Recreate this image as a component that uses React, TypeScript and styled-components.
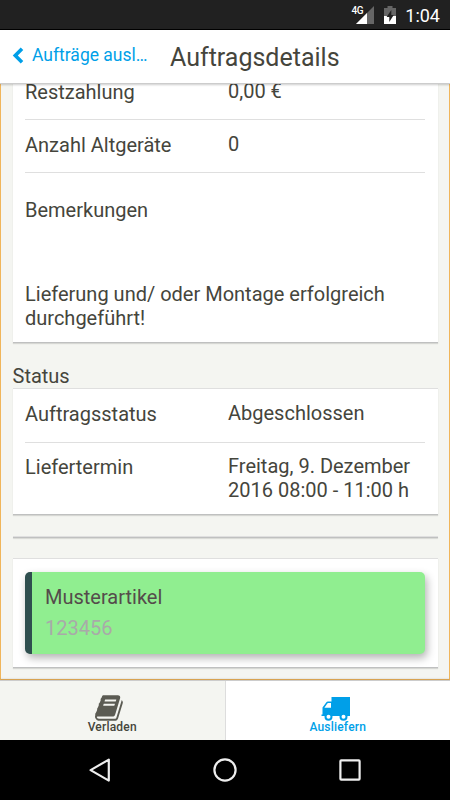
import React from "react";
import styled, { createGlobalStyle } from "styled-components";

const colors = {
  text: "#45453c",
  blue: "#009fe8",
  page: "#f4f5f1",
  line: "#dfdfdf",
  orange: "#f0b55a",
};

const App = () => {
  const orderRows = [
    { label: "Restzahlung", value: "0,00 €" },
    { label: "Anzahl Altgeräte", value: "0" },
  ];

  const statusRows = [
    { label: "Auftragsstatus", value: "Abgeschlossen" },
    { label: "Liefertermin", value: "Freitag, 9. Dezember 2016 08:00 - 11:00 h" },
  ];

  return (
    <>
      <GlobalStyle />
      <Screen>
        <StatusBar>
          <Network>4G</Network>
          <SignalIcon />
          <BatteryIcon />
          <Clock>1:04</Clock>
        </StatusBar>
        <Header>
          <BackButton>
            <svg width="12" height="17" viewBox="0 0 12 17">
              <path d="M10 1.8 3.3 8.5 10 15.2" fill="none" stroke="currentColor" strokeWidth="3.6" />
            </svg>
            <BackText>Aufträge ausl…</BackText>
          </BackButton>
          <Title>Auftragsdetails</Title>
        </Header>
        <Content>
          <OrderCard>
            {orderRows.map((row) => (
              <Row key={row.label}>
                <Label>{row.label}</Label>
                <Value>{row.value}</Value>
              </Row>
            ))}
            <Remarks>
              <Label>Bemerkungen</Label>
              <RemarkText>Lieferung und/ oder Montage erfolgreich durchgeführt!</RemarkText>
            </Remarks>
          </OrderCard>
          <SectionTitle>Status</SectionTitle>
          <StatusCard>
            {statusRows.map((row) => (
              <Row key={row.label}>
                <Label>{row.label}</Label>
                <Value>{row.value}</Value>
              </Row>
            ))}
          </StatusCard>
          <EmptyCard />
          <ArticleCard>
            <Article>
              <ArticleName>Musterartikel</ArticleName>
              <ArticleNumber>123456</ArticleNumber>
            </Article>
          </ArticleCard>
        </Content>
        <Tabs>
          <Tab>
            <BookIcon />
            <TabText>Verladen</TabText>
          </Tab>
          <Tab $active>
            <TruckIcon />
            <TabText>Ausliefern</TabText>
          </Tab>
        </Tabs>
        <SystemNav>
          <svg width="26" height="26" viewBox="0 0 26 26">
            <path d="M21.8 2.6v21L3.6 13.1Z" />
          </svg>
          <svg width="26" height="26" viewBox="0 0 26 26">
            <circle cx="13" cy="13" r="10.6" />
          </svg>
          <svg width="26" height="26" viewBox="0 0 26 26">
            <rect x="3.4" y="3.4" width="19.2" height="19.2" rx="0.8" />
          </svg>
        </SystemNav>
      </Screen>
    </>
  );
};

export default App;

const SignalIcon = () => (
  <svg width="18" height="18" viewBox="0 0 18 18">
    <path d="M18 0v18H0Z" fill="#666" />
    <path d="M11 7V18H0Z" fill="#fff" />
  </svg>
);

const BatteryIcon = () => (
  <svg width="12" height="18" viewBox="0 0 12 18">
    <path d="M3.5 0h5v2H12v8H0V2h3.5Z" fill="#666" />
    <path d="M0 10h12v8H0Z" fill="#fff" />
    <path d="M7.3 4 2.6 11h2.7v5l4.4-7H7.3Z" fill="#212121" />
  </svg>
);

const BookIcon = () => (
  <svg width="30" height="30" viewBox="0 0 1792 1792" fill="#5b5b53">
    <path d="M1639 478q40 57 18 129l-275 906q-19 64-76.500 107.500t-122.500 43.500h-923q-77 0-148.500-53.500t-99.500-131.500q-24-67-2-127 0-4 3-27t4-37q1-8-3-21.500t-3-19.500q2-11 8-21t16.500-23.500 16.500-23.500q23-38 45-91.500t30-91.500q3-10 .5-30t-.5-28q3-11 17-28t17-23q21-36 42-92t25-90q1-9-2.500-32t.5-28q4-13 22-30.500t22-22.500q19-26 42.500-84.500t27.500-96.500q1-8-3-25.500t-2-26.500q2-8 9-18t18-23 17-21q8-12 16.500-30.500t15-35 16-36 19.500-32 26.500-23.500 36-11.500 47.500 5.500l-1 3q38-9 51-9h761q74 0 114 56t18 130l-274 906q-36 119-71.500 153.500t-128.500 34.500h-869q-27 0-38 15-11 16-1 43 24 70 144 70h923q29 0 56-15.500t35-41.500l300-987q7-22 5-57 38 15 59 43zm-1064 2q-4 13 2 22.500t20 9.500h608q13 0 25.500-9.500t16.500-22.500l21-64q4-13-2-22.500t-20-9.500h-608q-13 0-25.500 9.500t-16.500 22.500zm-83 256q-4 13 2 22.500t20 9.500h608q13 0 25.500-9.500t16.500-22.500l21-64q4-13-2-22.500t-20-9.500h-608q-13 0-25.500 9.500t-16.500 22.500z" />
  </svg>
);

const TruckIcon = () => (
  <svg width="30" height="30" viewBox="0 0 30 30">
    <path
      d="M10.5 4h18.5v19H0.5v-1.5H1.5V14.5L5.2 9.5Q5.8 8.5 7 8.5h3.5Z M3.4 14.8H10V10H7.2Q6.6 10 6.3 10.500Z"
      fill="currentColor"
      fillRule="evenodd"
    />
    <circle cx="7.5" cy="23.7" r="3" fill="#fff" stroke="currentColor" strokeWidth="2" />
    <circle cx="22.5" cy="23.7" r="3" fill="#fff" stroke="currentColor" strokeWidth="2" />
  </svg>
);

const GlobalStyle = createGlobalStyle`
  * {
    box-sizing: border-box;
  }

  body {
    margin: 0;
    font-family: Roboto, sans-serif;
    color: ${colors.text};
  }
`;

const Screen = styled.div`
  display: flex;
  flex-direction: column;
  width: 450px;
  height: 800px;
  overflow: hidden;
  background: ${colors.page};
`;

const StatusBar = styled.div`
  display: flex;
  flex-shrink: 0;
  justify-content: flex-end;
  height: 30px;
  padding: 6px 10px 0 0;
  background: #212121;
  border-bottom: 1px solid #000;
  color: #fff;

  svg + svg {
    margin-left: 10px;
  }
`;

const Network = styled.span`
  margin-right: -7px;
  z-index: 1;
  font-size: 10px;
  font-weight: 500;
  line-height: 9px;
  letter-spacing: -0.4px;
`;

const Clock = styled.span`
  margin-left: 9px;
  font-size: 18px;
  line-height: 20px;
`;

const Header = styled.header`
  display: flex;
  flex-shrink: 0;
  align-items: center;
  height: 54px;
  padding-left: 12px;
  background: #fff;
  border-bottom: 1px solid #ccc;
  box-shadow: 0 1px 2px rgba(0, 0, 0, 0.2);
  z-index: 1;
`;

const BackButton = styled.div`
  display: flex;
  align-items: center;
  gap: 8px;
  width: 158px;
  margin-top: -3px;
  color: ${colors.blue};
`;

const BackText = styled.span`
  font-size: 17.5px;
  white-space: nowrap;
`;

const Title = styled.h1`
  margin: 1px 0 0;
  font-size: 25px;
  font-weight: 400;
`;

const Content = styled.main`
  flex: 1;
  min-height: 0;
  overflow: hidden;
  padding: 0 11.5px;
  border: 1px solid ${colors.orange};
  border-top: 0;
  font-size: 20px;
  line-height: 24px;
`;

const Card = styled.section`
  padding: 0 12.5px;
  background: #fff;
  border-top: 1px solid ${colors.line};
  border-bottom: 1px solid #bfc0c0;
  box-shadow: 0 1px 1px rgba(0, 0, 0, 0.12);
`;

const OrderCard = styled(Card)`
  height: 277px;
  margin-top: -18px;
`;

const StatusCard = styled(Card)`
  height: 127px;
`;

const EmptyCard = styled(Card)`
  height: 2px;
  margin-top: 21px;
`;

const ArticleCard = styled(Card)`
  height: 110px;
  margin-top: 20px;
  padding-top: 13px;
`;

const Row = styled.div`
  display: flex;
  height: 53px;
  padding-top: 12px;
  border-bottom: 1px solid ${colors.line};

  ${StatusCard} &:first-child {
    height: 54px;
  }

  ${StatusCard} &:last-child {
    padding-top: 11px;
    border-bottom: 0;
  }
`;

const Label = styled.div`
  width: 203px;
  padding-top: 1px;
`;

const Value = styled.div`
  flex: 1;
`;

const Remarks = styled.div`
  padding-top: 24px;
`;

const RemarkText = styled.p`
  margin: 60px 0 0;
`;

const SectionTitle = styled.h2`
  margin: 21px 0 0;
  font-size: 20px;
  font-weight: 400;
  line-height: 24px;
`;

const Article = styled.div`
  height: 82px;
  padding: 13px 12px 0 13px;
  background: #90ee90;
  border-left: 7px solid #2f4f4f;
  border-radius: 5px;
  box-shadow: 2px 4px 9px rgba(0, 0, 0, 0.3);
`;

const ArticleName = styled.div`
  color: #554b4b;
`;

const ArticleNumber = styled.div`
  margin-top: 7px;
  color: #a9a9a9;
`;

const Tabs = styled.nav`
  display: flex;
  flex-shrink: 0;
  height: 60px;
  border-top: 1px solid #ccc;
  box-shadow: 0 -1px 2px rgba(0, 0, 0, 0.15);
`;

const Tab = styled.div<{ $active?: boolean }>`
  display: flex;
  flex: 1;
  flex-direction: column;
  align-items: center;
  padding-top: 12px;
  background: ${({ $active }) => ($active ? "#fff" : colors.page)};
  color: ${({ $active }) => ($active ? colors.blue : colors.text)};
  border-left: ${({ $active }) => ($active ? "1px solid #ddd" : "0")};

  svg {
    margin-right: 4px;
  }
`;

const TabText = styled.span`
  margin-top: -3px;
  font-size: 12px;
  font-weight: 500;
  line-height: 14px;
  letter-spacing: 0.2px;
`;

const SystemNav = styled.div`
  display: flex;
  flex-shrink: 0;
  align-items: center;
  justify-content: center;
  gap: 99px;
  height: 60px;
  background: #000;

  svg {
    fill: none;
    stroke: #eee;
    stroke-width: 2.2;
    stroke-linejoin: round;
  }
`;
